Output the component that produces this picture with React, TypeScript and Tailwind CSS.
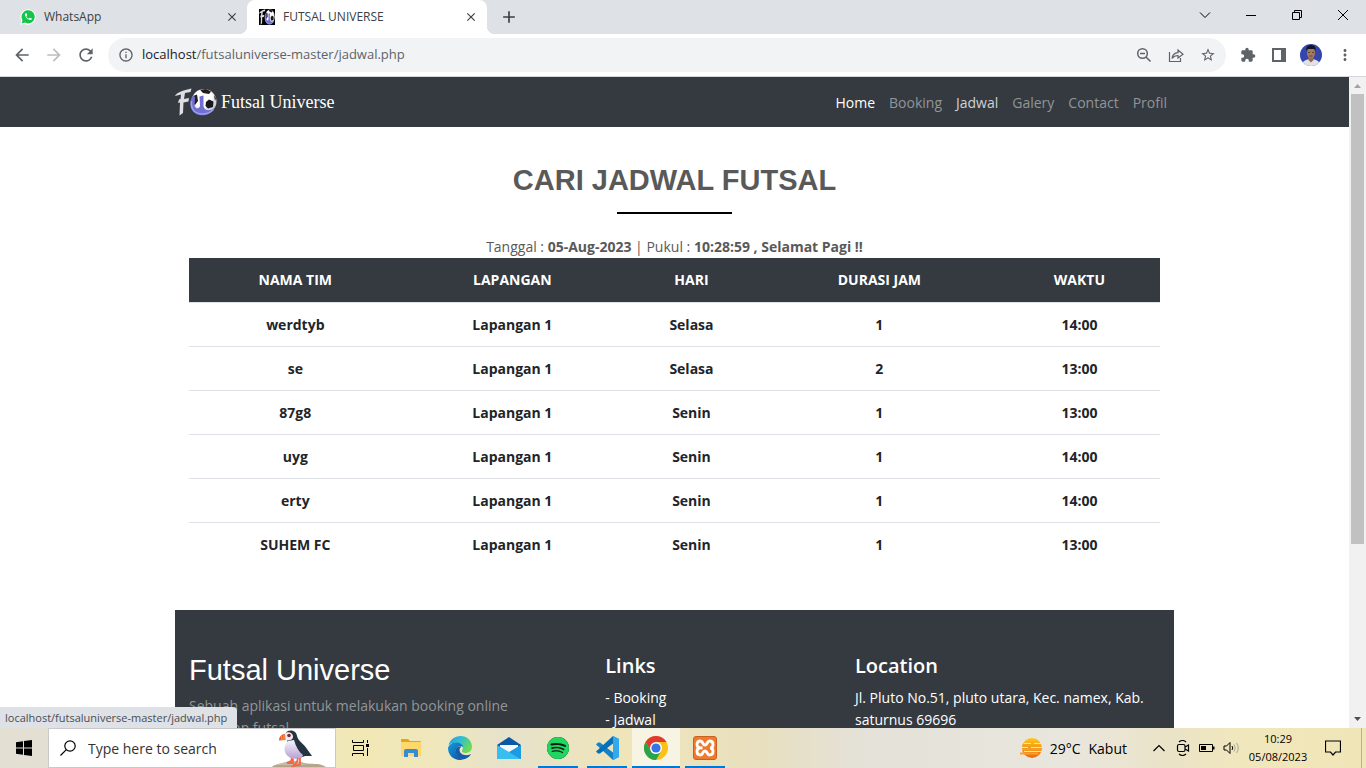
import React from "react";
import {
  MdAdd,
  MdArrowBack,
  MdArrowForward,
  MdClose,
  MdExtension,
  MdInfoOutline,
  MdMoreVert,
  MdRefresh,
  MdStarBorder,
} from "react-icons/md";
import { SiSpotify } from "react-icons/si";

const matches = [
  ["werdtyb", "Lapangan 1", "Selasa", "1", "14:00"],
  ["se", "Lapangan 1", "Selasa", "2", "13:00"],
  ["87g8", "Lapangan 1", "Senin", "1", "13:00"],
  ["uyg", "Lapangan 1", "Senin", "1", "14:00"],
  ["erty", "Lapangan 1", "Senin", "1", "14:00"],
  ["SUHEM FC", "Lapangan 1", "Senin", "1", "13:00"],
];

const navLinks = [
  { label: "Home", tone: "text-white" },
  { label: "Booking", tone: "text-[#929597]" },
  { label: "Jadwal", tone: "text-[#d0d2d3]" },
  { label: "Galery", tone: "text-[#929597]" },
  { label: "Contact", tone: "text-[#929597]" },
  { label: "Profil", tone: "text-[#929597]" },
];

function ClubLogo({ className }: { className: string }) {
  return (
    <svg viewBox="0 0 42 28" className={className} aria-hidden="true">
      <defs>
        <radialGradient id="ball" cx="45%" cy="35%" r="65%">
          <stop offset="0.55" stopColor="#ffffff" />
          <stop offset="1" stopColor="#b9b9c4" />
        </radialGradient>
      </defs>
      <circle cx="29" cy="13.500" r="12.500" fill="url(#ball)" />
      <path d="M25 1.800 L31 1 L36 3.500 L34 6 L28 5Z" fill="#271a1c" />
      <path d="M31 14 L34 11.500 L38.500 13.500 L38 19 L33 20.500 L30.500 18Z" fill="#18181c" />
      <path d="M18 8 L22 6.500 L23 13 L20 17 L17 15Z" fill="#2a1d22" />
      <path d="M39 7 L41 10 L40 13Z" fill="#33262a" />
      <path
        d="M18 7.500C13 14 15 26.500 26 27.300 33 27.500 37.500 24.500 39.500 20 35 23.500 29 23 28.500 18L28.500 7.500 24.500 8.500 25 18C24 21.500 20 21 19.500 17L20 9Z"
        fill="#6f70cf"
      />
      <path d="M16.500 13C15.500 19 18 25 26 26 32 26.500 36 24 38.500 21.500" fill="none" stroke="#9ba0ee" strokeWidth="1.400" />
      <path
        d="M0 8C1 5 8 2 16.500 .500L15.500 4 10 5 9 11 14 10 13.500 13.500 8.500 14.500 8 25 4.500 27.500 5 14.500 3 15 4 11.500 5.500 11 6 6.500Z"
        fill="#dedfe0"
      />
    </svg>
  );
}

function WhatsAppIcon() {
  return (
    <svg viewBox="0 0 16 16" className="size-4" aria-hidden="true">
      <path d="M.3 15.800 1.400 11.700A7.700 7.700 0 1 1 4.400 14.700Z" fill="#fff" />
      <path d="M1.600 14.500 2.500 11.300A6.600 6.600 0 1 1 4.900 13.600Z" fill="#16c449" />
      <path
        transform="translate(3.800 3.300) scale(.37)"
        fill="#fff"
        d="M6.620 10.790c1.440 2.830 3.760 5.140 6.590 6.590l2.200-2.200c.27-.27.67-.36 1.020-.24 1.120.37 2.330.57 3.570.57.55 0 1 .45 1 1V20c0 .55-.45 1-1 1-9.390 0-17-7.610-17-17 0-.55.45-1 1-1h3.500c.55 0 1 .45 1 1 0 1.250.2 2.450.57 3.570.11.35.03.74-.25 1.020l-2.200 2.200z"
      />
    </svg>
  );
}

function BrowserTabs() {
  return (
    <div className="flex h-[34px] shrink-0 bg-[#dee1e6] text-[12px] text-[#3c4043]">
      <div className="flex w-[247px] items-center pl-5 pr-2">
        <WhatsAppIcon />
        <span className="flex-1 pl-2">WhatsApp</span>
        <button type="button" aria-label="Close WhatsApp tab">
          <MdClose className="size-[14px]" />
        </button>
      </div>
      <div className="relative flex w-60 items-center rounded-t-lg bg-white pl-3 pr-[9px]">
        <span className="absolute bottom-0 -left-2 size-2 bg-[radial-gradient(circle_at_0_0,transparent_8px,white_8px)]" />
        <span className="absolute bottom-0 -right-2 size-2 bg-[radial-gradient(circle_at_100%_0,transparent_8px,white_8px)]" />
        <span className="flex size-4 items-center bg-black">
          <ClubLogo className="size-4 scale-y-150" />
        </span>
        <span className="flex-1 pl-2">FUTSAL UNIVERSE</span>
        <button type="button" aria-label="Close Futsal Universe tab">
          <MdClose className="size-[14px]" />
        </button>
      </div>
      <button type="button" aria-label="New tab" className="ml-3">
        <MdAdd className="size-5" />
      </button>
      <div className="ml-auto flex items-center pb-1 text-black">
        <button type="button" aria-label="Search tabs" className="flex w-[46px] justify-center">
          <svg viewBox="0 0 12 12" className="size-3" fill="none" stroke="currentColor">
            <path d="M1 3.500 6 8.500 11 3.500" />
          </svg>
        </button>
        <button type="button" aria-label="Minimize" className="flex w-[46px] justify-center">
          <svg viewBox="0 0 10 10" className="size-[10px]" fill="none" stroke="currentColor">
            <path d="M0 5.500H10" />
          </svg>
        </button>
        <button type="button" aria-label="Restore" className="flex w-[46px] justify-center">
          <svg viewBox="0 0 10 10" className="size-[10px]" fill="none" stroke="currentColor">
            <path d="M.5 2.500H7.500V9.500H.5ZM2.500 2.500V.5H9.500V7.500H7.500" />
          </svg>
        </button>
        <button type="button" aria-label="Close" className="flex w-[46px] justify-center">
          <svg viewBox="0 0 10 10" className="size-[10px]" fill="none" stroke="currentColor">
            <path d="M0 0 10 10M10 0 0 10" />
          </svg>
        </button>
      </div>
    </div>
  );
}

function Avatar() {
  return (
    <svg viewBox="0 0 22 22" className="size-[22px]" aria-hidden="true">
      <clipPath id="avatar">
        <circle cx="11" cy="11" r="11" />
      </clipPath>
      <g clipPath="url(#avatar)">
        <rect width="22" height="22" fill="#3346ad" />
        <path d="M2 22C2 17 6 15 11 15s9 2 9 7Z" fill="#dfe2e8" />
        <path d="M8.500 12h5v4L11 18.500 8.500 16Z" fill="#94684f" />
        <ellipse cx="11" cy="9" rx="4" ry="5.500" fill="#a67a5f" />
        <path d="M6.500 7C5.500 3 8 1 11 1s5.500 2 4.500 6L14.500 5H7.500Z" fill="#15151c" />
        <path d="M8 8.500h2M12 8.500h2M9.500 12h3" stroke="#4d3226" strokeWidth=".8" />
      </g>
    </svg>
  );
}

function AddressBar() {
  return (
    <div className="flex h-[43px] shrink-0 items-center border-b border-[#d5d7da] bg-white text-[#5f6368]">
      <div className="flex w-[108px] shrink-0 items-center gap-3 pl-3">
        <button type="button" aria-label="Back">
          <MdArrowBack className="size-5" />
        </button>
        <button type="button" aria-label="Forward" className="text-[#bbbdc0]">
          <MdArrowForward className="size-5" />
        </button>
        <button type="button" aria-label="Reload">
          <MdRefresh className="size-5" />
        </button>
      </div>
      <div className="flex h-[34px] flex-1 items-center rounded-full bg-[#f1f3f4] px-[10px]">
        <MdInfoOutline className="size-4 shrink-0" />
        <a href="#address" className="flex-1 pl-2 text-[13px]">
          <span className="text-[#202124]">localhost</span>/futsaluniverse-master/jadwal.php
        </a>
        <div className="flex items-center gap-4">
          <button type="button" aria-label="Zoom">
            <svg viewBox="0 0 16 16" className="size-4" fill="none" stroke="currentColor" strokeWidth="1.500">
              <circle cx="6.500" cy="6.500" r="4.800" />
              <path d="M10 10 14.500 14.500M4 6.500H9" />
            </svg>
          </button>
          <button type="button" aria-label="Share">
            <svg viewBox="0 0 16 16" className="size-4" fill="none" stroke="currentColor" strokeWidth="1.200">
              <path d="M1.500 5V14.500H12.500V11M4 11.500C4.500 8 6.500 6 10 5.700V3L15 7.200 10 11V8.500C7.500 8.500 5.500 9.500 4 11.500Z" />
            </svg>
          </button>
          <button type="button" aria-label="Bookmark">
            <MdStarBorder className="size-4" />
          </button>
        </div>
      </div>
      <div className="flex items-center gap-[14px] pl-[14px] pr-3">
        <button type="button" aria-label="Extensions">
          <MdExtension className="size-4" />
        </button>
        <button type="button" aria-label="Side panel" className="ml-[2px]">
          <svg viewBox="0 0 14 14" className="size-[14px]">
            <path fillRule="evenodd" d="M0 0H14V14H0ZM2 2V12H9V2Z" fill="currentColor" />
          </svg>
        </button>
        <button type="button" aria-label="Profile">
          <Avatar />
        </button>
        <button type="button" aria-label="Menu">
          <MdMoreVert className="size-[18px]" />
        </button>
      </div>
    </div>
  );
}

function SiteHeader() {
  return (
    <header className="bg-[#343a40]">
      <div className="mx-auto flex h-[50px] max-w-[999px] items-center justify-between">
        <a href="#home" className="flex items-center gap-1 font-['Liberation_Serif',serif] text-[18px] text-white">
          <ClubLogo className="h-7 w-[42px]" />
          Futsal Universe
        </a>
        <nav className="flex gap-[14px] pr-[7px] text-[14px]">
          {navLinks.map((link) => (
            <a key={link.label} href={"#" + link.label.toLowerCase()} className={link.tone}>
              {link.label}
            </a>
          ))}
        </nav>
      </div>
    </header>
  );
}

function Schedule() {
  return (
    <main className="mx-auto max-w-[999px] px-[14px] pt-9 text-center">
      <h1 className="font-['Liberation_Sans',sans-serif] text-[29px] leading-[34px] font-bold text-[#595959]">
        CARI JADWAL FUTSAL
      </h1>
      <hr className="mx-auto mt-[15px] w-[115px] border-t-2 border-black" />
      <p className="mt-[22px] text-[14px] leading-[22px] text-[#595959]">
        Tanggal : <b>05-Aug-2023</b> | Pukul : <b>10:28:59 , Selamat Pagi !!</b>
      </p>
      <table className="w-full table-fixed text-[14px] leading-[22px] font-bold text-[#212529]">
        <colgroup>
          <col className="w-[21.9%]" />
          <col className="w-[22.8%]" />
          <col className="w-[14.1%]" />
          <col className="w-[24.6%]" />
          <col className="w-[16.6%]" />
        </colgroup>
        <thead className="bg-[#343a40] text-white">
          <tr>
            {["NAMA TIM", "LAPANGAN", "HARI", "DURASI JAM", "WAKTU"].map((head) => (
              <th key={head} scope="col" className="py-[11px]">
                {head}
              </th>
            ))}
          </tr>
        </thead>
        <tbody>
          {matches.map((row) => (
            <tr key={row[0]} className="border-t border-[#dee2e6]">
              {row.map((cell, i) => (
                <td key={i} className="pt-[11px] pb-[10px]">
                  {cell}
                </td>
              ))}
            </tr>
          ))}
        </tbody>
      </table>
    </main>
  );
}

function SiteFooter() {
  return (
    <footer className="mx-auto mt-11 grid max-w-[999px] grid-cols-12 bg-[#343a40] pt-[43px] pb-10 text-[14px] leading-[22px] text-white">
      <section className="col-span-5 px-[14px]">
        <h2 className="mb-2 font-['Liberation_Sans',sans-serif] text-[29px] leading-[34px]">Futsal Universe</h2>
        <p className="max-w-[330px] text-[#929597]">Sebuah aplikasi untuk melakukan booking online lapangan futsal.</p>
      </section>
      <section className="col-span-3 px-[14px]">
        <h3 className="mb-2 text-[20px] leading-[26px] font-semibold">Links</h3>
        <ul>
          {["Booking", "Jadwal"].map((label) => (
            <li key={label}>
              <a href={"#" + label.toLowerCase()}>- {label}</a>
            </li>
          ))}
        </ul>
      </section>
      <section className="col-span-4 px-[14px]">
        <h3 className="mb-2 text-[20px] leading-[26px] font-semibold">Location</h3>
        <p>Jl. Pluto No.51, pluto utara, Kec. namex, Kab. saturnus 69696</p>
      </section>
    </footer>
  );
}

function Scrollbar() {
  return (
    <div className="flex w-[17px] shrink-0 flex-col items-center bg-[#f1f1f1]">
      <svg viewBox="0 0 17 17" className="size-[17px] shrink-0">
        <path d="M5 11 8.500 7 12 11Z" fill="#a3a3a3" />
      </svg>
      <div className="min-h-0 w-[13px] flex-1">
        <div className="h-[73%] bg-[#c1c1c1]" />
      </div>
      <svg viewBox="0 0 17 17" className="size-[17px] shrink-0">
        <path d="M5 6 8.500 10 12 6Z" fill="#505050" />
      </svg>
    </div>
  );
}

function Puffin() {
  return (
    <svg viewBox="0 0 54 38" className="h-[38px] w-[54px] shrink-0 self-end" aria-hidden="true">
      <defs>
        <linearGradient id="belly" x1="0" y1="0" x2="0" y2="1">
          <stop offset="0" stopColor="#f7f5fb" />
          <stop offset="1" stopColor="#b5a0d5" />
        </linearGradient>
      </defs>
      <path d="M0 38C2 35 9 35 14 33 20 31 28 32 32 34 40 36 46 33 54 38Z" fill="#b5a58d" />
      <path d="M4 36C9 34 15 33 19 32 25 32 30 34 34 36Z" fill="#cbbda7" />
      <path d="M13 6C14 0 24 0 25 7 26 12 32 15 35 20L40 27 33 27C25 31 19 28 17 20L15 11Z" fill="#253440" />
      <path d="M16 12C10 18 12 27 20 29.500 26 30.500 31 29 31 26 27 23 24 18 22 11Z" fill="url(#belly)" />
      <path d="M12 5C15 2 21 3 21 8 21 11 17 12.500 12 11Z" fill="#eceaf2" />
      <path d="M13 5C9 5 7 8 7 11.500L13.500 11Z" fill="#ef5a2d" />
      <path d="M9.500 6.500 10 11M12 5.500 12 11" stroke="#f5ac40" />
      <circle cx="17" cy="6.500" r="1.800" fill="#7c2c31" />
      <path d="M20 29 19 32 15 34 21 34 21 30M26 29 25 33 21 37 28 35.500 28 29" fill="none" stroke="#f26645" strokeWidth="1.800" />
    </svg>
  );
}

function EdgeIcon() {
  return (
    <svg viewBox="0 0 24 24" className="size-6" aria-hidden="true">
      <defs>
        <linearGradient id="edgeTop" x1="0" y1="0" x2="1" y2=".5">
          <stop stopColor="#2798df" />
          <stop offset=".5" stopColor="#30bed6" />
          <stop offset="1" stopColor="#6bdc52" />
        </linearGradient>
        <linearGradient id="edgeLow" x1="0" y1="0" x2="1" y2="1">
          <stop stopColor="#159cde" />
          <stop offset="1" stopColor="#0b4d9c" />
        </linearGradient>
      </defs>
      <path d="M.5 9.500C2 3.500 7 0 12.500 0 19 0 24 4.800 24 10.500 24 15 20.500 17 17.500 17 15 17 13.500 16 14 14.500 16.500 11.500 14 7.500 9.500 7 6 6.500 2.500 7 .5 9.500Z" fill="url(#edgeTop)" />
      <path d="M0 12C1 8.500 4 6.500 8 6.500 12 6.500 15 8.500 15.500 11.500 13 9 9 10 8 13.500 7 19 12 23 16 23.300 8 26 0 20.500 0 12Z" fill="url(#edgeLow)" />
      <path d="M8 13C6.500 19 11 23.500 16 23.300 19 22.500 22 20.500 23 18 18 20.500 12 19 11.500 14 11.400 12.500 12.500 11.500 13.500 10.500 11 10 9 11 8 13Z" fill="#155ba8" />
    </svg>
  );
}

function ChromeIcon() {
  return (
    <svg viewBox="0 0 24 24" className="size-6" aria-hidden="true">
      <circle cx="12" cy="12" r="12" fill="#fbc116" />
      <path d="M1.600 6A12 12 0 0 1 22.400 6H12L7 15Z" fill="#df3b31" />
      <path d="M1.600 6A12 12 0 0 0 12 24L17.200 15A6 6 0 0 1 6.800 15Z" fill="#29a34c" />
      <circle cx="12" cy="12" r="6" fill="#fff" />
      <circle cx="12" cy="12" r="4.600" fill="#3375e9" />
    </svg>
  );
}

const pinned = [
  {
    name: "File Explorer",
    bar: "",
    icon: (
      <svg viewBox="0 0 22 20" className="h-5 w-[22px]">
        <path d="M1 1H8L10 3H20Q21 3 21 4V18H1Z" fill="#e3a51b" />
        <path d="M1 4H21V18H1Z" fill="#ffd76b" />
        <path d="M4 19V13Q4 11 6 11H16Q18 11 18 13V19H14V15H8V19Z" fill="#378bd2" />
      </svg>
    ),
  },
  { name: "Microsoft Edge", bar: "", icon: <EdgeIcon /> },
  {
    name: "Mail",
    bar: "",
    icon: (
      <svg viewBox="0 0 24 22" className="h-[22px] w-6">
        <path d="M0 8 12 0 24 8V11H0Z" fill="#0c58a8" />
        <path d="M3 8H21V15H3Z" fill="#f6f8fa" />
        <path d="M0 8 12 16 24 8V22H0Z" fill="#1793df" />
        <path d="M0 8 12 15 24 22H0Z" fill="#39bdf0" />
        <path d="M12 15 24 8V22Z" fill="#1c9be2" />
      </svg>
    ),
  },
  {
    name: "Spotify",
    bar: "mx-1 border-[#0078d7]",
    icon: (
      <span className="flex size-[22px] rounded-full bg-[#121a14]">
        <SiSpotify className="size-[22px] text-[#1ed760]" />
      </span>
    ),
  },
  {
    name: "Visual Studio Code",
    bar: "mx-1 border-[#0078d7]",
    icon: (
      <svg viewBox="0 0 24 24" className="size-6">
        <path d="M18 0 24 3V21L18 24 1 8.500 3 6.500 5 6.500 18 16.500Z" fill="#1482cb" />
        <path d="M18 0 1 15.500 3 17.500H5L18 7.500Z" fill="#0870b5" />
        <path d="M18 0 24 3V21L18 24Z" fill="#32a8ef" />
      </svg>
    ),
  },
  { name: "Google Chrome", bar: "bg-[#f8f4e4] border-[#0078d7]", icon: <ChromeIcon /> },
  {
    name: "XAMPP",
    bar: "mx-1 border-[#0078d7]",
    icon: (
      <svg viewBox="0 0 24 24" className="size-6">
        <rect x=".5" y=".5" width="23" height="23" rx="2.500" fill="#f07a2c" stroke="#c9601f" />
        <path
          d="M9.500 12C5 12 4 10.500 4 8.500 4 6 5.500 5 7.500 5 10 5 9.500 9 12 9 14.500 9 14 5 16.500 5 18.500 5 20 6 20 8.500 20 10.500 19 12 17 12 19 12 20 13.500 20 15.500 20 18 18.500 19 16.500 19 14 19 14.500 15 12 15 9.500 15 10 19 7.500 19 5.500 19 4 18 4 15.500 4 13.500 5 12 7 12"
          fill="none"
          stroke="#fff"
          strokeWidth="2.800"
        />
      </svg>
    ),
  },
];

function Taskbar() {
  return (
    <footer className="flex h-10 shrink-0 bg-[linear-gradient(90deg,#e2dfd3_0%,#e8e3cc_20%,#f2e8b4_26%,#efe7bc_32%,#e6e2cb_37%,#efe5b8_46%,#e8dfc0_56%,#e4e1d8_63%,#e9e6de_78%,#ebe3c6_86%,#f1e7bd_91%,#efe5b7_100%)] text-black">
      <button type="button" aria-label="Start" className="flex w-12 items-center justify-center">
        <svg viewBox="0 0 16 16" className="size-4">
          <path d="M0 2.200 7 1.200V7.500H0ZM8 1 16 0V7.500H8ZM0 8.500H7V14.800L0 13.800ZM8 8.500H16V16L8 15Z" />
        </svg>
      </button>
      <label className="flex w-[288px] items-center overflow-hidden border border-[#c9c9c9] bg-white pl-[11px]">
        <svg viewBox="0 0 16 16" className="size-4 shrink-0" fill="none" stroke="currentColor" strokeWidth="1.200">
          <circle cx="10" cy="6" r="5.200" />
          <path d="M6.300 9.700.5 15.500" />
        </svg>
        <input
          aria-label="Search Windows"
          placeholder="Type here to search"
          className="ml-3 w-[184px] bg-transparent text-[14px] outline-none placeholder:text-[#333]"
        />
        <Puffin />
      </label>
      <button type="button" aria-label="Task View" className="flex w-12 items-center justify-center">
        <svg viewBox="0 0 17 16" className="h-4 w-[17px]" fill="none" stroke="currentColor">
          <path d="M.5 0V2.500H11.500V0M.5 16V13.500H11.500V16M1.500 5.500H11.500V10.500H1.500ZM15.500 0V3M15.500 8V16" />
          <path d="M14 4H17V7H14Z" fill="currentColor" stroke="none" />
        </svg>
      </button>
      <div className="ml-[3px] flex gap-px">
        {pinned.map((app) => (
          <button key={app.name} type="button" aria-label={app.name} className="flex w-12">
            <span
              className={
                "flex h-full flex-1 items-center justify-center border-b-2 pt-[2px] " + (app.bar || "border-transparent")
              }
            >
              {app.icon}
            </span>
          </button>
        ))}
      </div>
      <div className="ml-auto flex items-center text-[14px]">
        <button type="button" className="mr-5 flex items-center gap-2">
          <svg viewBox="0 0 22 22" className="size-[22px]" aria-hidden="true">
            <defs>
              <linearGradient id="sun" x1="0" y1="0" x2="0" y2="1">
                <stop stopColor="#ffc814" />
                <stop offset="1" stopColor="#e8681a" />
              </linearGradient>
            </defs>
            <circle cx="12" cy="11" r="10" fill="url(#sun)" />
            <path d="M4 6.500H11M14 6.500H21M1 10.500H8M11 10.500H22M4 14.500H22" stroke="#f8e6b8" strokeWidth="1.200" />
            <path d="M2 8.500H13M3 12.500H21M0 16.500H18" stroke="#f3a324" strokeWidth="1.800" />
          </svg>
          <span>29°C</span>
          <span>Kabut</span>
        </button>
        <button type="button" aria-label="Show hidden icons" className="w-6">
          <svg viewBox="0 0 12 12" className="mx-auto size-3" fill="none" stroke="currentColor" strokeWidth="1.200">
            <path d="M.5 9 6 3.500 11.500 9" />
          </svg>
        </button>
        <button type="button" aria-label="Meet Now" className="w-6">
          <svg viewBox="0 0 14 16" className="mx-auto h-4 w-[14px]" fill="none" stroke="currentColor" strokeWidth="1.200">
            <path d="M3 2Q6.500-1 10 2M3 14Q6.500 17 10 14M9 7 12.500 5V11L9 9" />
            <rect x="1.500" y="4.500" width="7.500" height="7" rx="1.500" />
          </svg>
        </button>
        <button type="button" aria-label="Battery" className="w-6">
          <svg viewBox="0 0 16 10" className="mx-auto h-[10px] w-4">
            <path d="M.5 1.500H13.500V8.500H.5Z" fill="none" stroke="currentColor" />
            <path d="M2 3H7V7H2ZM14 3.500H15.500V6.500H14Z" />
          </svg>
        </button>
        <button type="button" aria-label="Volume" className="w-6">
          <svg viewBox="0 0 17 14" className="mx-auto h-[14px] w-[17px]" fill="none" stroke="currentColor">
            <path d="M1 5H3.500L7 1.500V12.500L3.500 9H1ZM9 5Q10.500 7 9 9" />
            <path d="M11 3.500Q13.500 7 11 10.500M13.500 2Q17 7 13.500 12" stroke="#aaa58e" />
          </svg>
        </button>
        <time className="w-[70px] text-center text-[11px] leading-[18px]">
          10:29
          <br />
          05/08/2023
        </time>
        <button type="button" aria-label="Notifications" className="flex w-10 justify-center">
          <svg viewBox="0 0 16 16" className="size-4" fill="none" stroke="currentColor" strokeWidth="1.200">
            <path d="M.5 1H15.500V12H10.500L8 15 5.500 12H.5Z" />
          </svg>
        </button>
        <button type="button" aria-label="Show desktop" className="ml-2 h-10 w-[5px] border-l border-[#b9b294]" />
      </div>
    </footer>
  );
}

export default function App() {
  return (
    <div className="flex h-screen flex-col overflow-hidden bg-white font-['Open_Sans','Noto_Sans',sans-serif]">
      <BrowserTabs />
      <AddressBar />
      <div className="relative flex min-h-0 flex-1">
        <div className="min-w-0 flex-1 overflow-hidden">
          <SiteHeader />
          <Schedule />
          <SiteFooter />
        </div>
        <Scrollbar />
        <div className="absolute bottom-0 left-0 rounded-tr bg-[#dee1e6] pl-[5px] pr-[10px] text-[11px] leading-[21px] text-[#4a4d51]">
          localhost/futsaluniverse-master/jadwal.php
        </div>
      </div>
      <Taskbar />
    </div>
  );
}
